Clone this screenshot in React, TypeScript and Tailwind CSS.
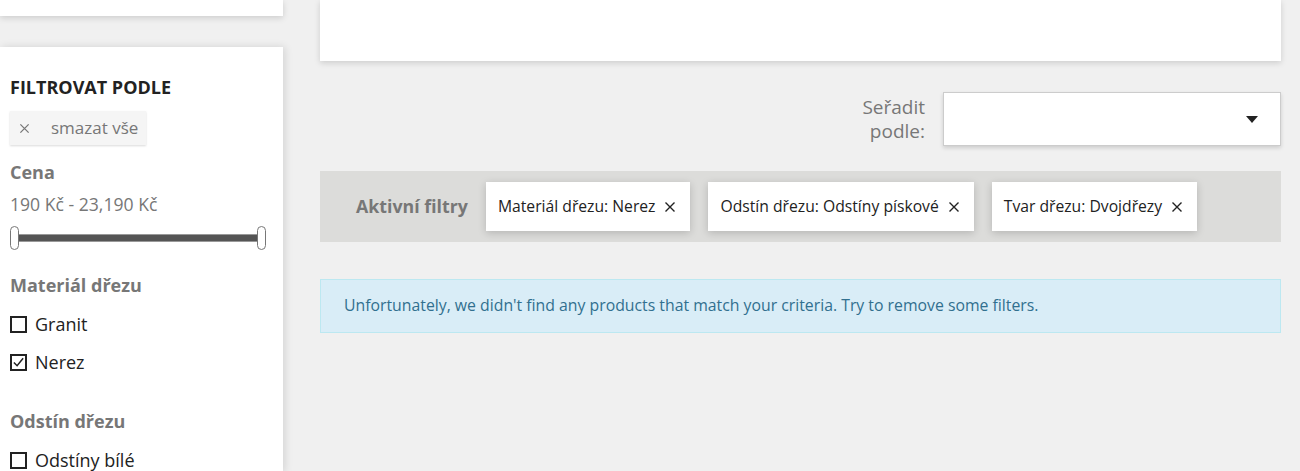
import React from "react";

const font = { fontFamily: '"Open Sans", "Noto Sans", sans-serif' };

function XIcon({ className = "" }: { className?: string }) {
  return (
    <svg viewBox="0 0 12 12" className={className} fill="none" stroke="currentColor" strokeWidth="1.4">
      <path d="M1.5 1.5 L10.5 10.5 M10.5 1.5 L1.5 10.5" />
    </svg>
  );
}

function Checkbox({ label, checked = false }: { label: string; checked?: boolean }) {
  return (
    <label className="flex items-center gap-[8px] h-6 text-[18px] text-[#222]">
      <span className="relative w-[17px] h-[17px] border-2 border-[#222] bg-white">
        {checked && (
          <svg viewBox="0 0 14 14" className="absolute inset-0 w-[13px] h-[13px]" fill="none" stroke="#222" strokeWidth="1.6">
            <path d="M2 7 L5.5 10.5 L12 2.5" />
          </svg>
        )}
      </span>
      {label}
    </label>
  );
}

function FilterChip({ label }: { label: string }) {
  return (
    <div className="flex items-center h-[49px] bg-white pl-3 pr-[14px] gap-[9px] shadow-[0_2px_8px_rgba(0,0,0,0.18)] text-[15.7px] text-[#222] whitespace-nowrap">
      <span>{label}</span>
      <XIcon className="w-[12px] h-[12px] text-[#222]" />
    </div>
  );
}

export default function App() {
  return (
    <div className="w-[1300px] h-[471px] overflow-hidden bg-[#f0f0f0] flex gap-[37px]" style={font}>
      <aside className="w-[283px] shrink-0 flex flex-col">
        <div className="h-4 shrink-0 bg-white shadow-[0_2px_6px_rgba(0,0,0,0.15)]" />
        <div className="mt-[31px] flex-1 bg-white shadow-[2px_0_8px_rgba(0,0,0,0.12)] pt-[28px] px-[10px]">
          <h2 className="text-[18px] leading-6 font-bold text-[#222]">FILTROVAT PODLE</h2>
          <button className="mt-3 h-[34px] flex items-center bg-[#f5f5f5] shadow-[0_1px_2px_rgba(0,0,0,0.15)] pl-[9px] pr-[8px] text-[17px] text-[#777]">
            <XIcon className="w-[11px] h-[11px] text-[#777]" />
            <span className="ml-[21px]">smazat vše</span>
          </button>
          <h3 className="mt-[15px] text-[18px] leading-6 font-bold text-[#777]">Cena</h3>
          <p className="mt-2 text-[17.6px] leading-6 text-[#777]">190 Kč - 23,190 Kč</p>
          <div className="mt-[10px] h-[24px] flex items-center w-[256px]">
            <span className="w-[9px] h-[24px] rounded-[5px] border border-[#777] bg-white shrink-0" />
            <span className="flex-1 h-[8px] bg-[#555] border-y border-[#999]" />
            <span className="w-[9px] h-[24px] rounded-[5px] border border-[#777] bg-white shrink-0" />
          </div>
          <h3 className="mt-[23px] text-[18px] leading-6 font-bold text-[#777]">Materiál dřezu</h3>
          <div className="mt-[15px] flex flex-col gap-[14px]">
            <Checkbox label="Granit" />
            <Checkbox label="Nerez" checked />
          </div>
          <h3 className="mt-[35px] text-[18px] leading-6 font-bold text-[#777]">Odstín dřezu</h3>
          <div className="mt-[15px] flex flex-col gap-[14px]">
            <Checkbox label="Odstíny bílé" />
          </div>
        </div>
      </aside>

      <main className="w-[961px] shrink-0 flex flex-col">
        <div className="h-[61px] shrink-0 bg-white shadow-[0_2px_6px_rgba(0,0,0,0.15)]" />

        <div className="mt-[31px] flex justify-end items-center gap-[18px]">
          <div className="text-right text-[19px] leading-6 text-[#777]">
            Seřadit
            <br />
            podle:
          </div>
          <div className="w-[338px] h-[54px] bg-white border border-[#ccc] shadow-[0_2px_4px_rgba(0,0,0,0.15)] flex items-center justify-end pr-[22px]">
            <svg viewBox="0 0 12 7" className="w-[12px] h-[7px]">
              <path d="M0 0 L12 0 L6 7 Z" fill="#222" />
            </svg>
          </div>
        </div>

        <div className="mt-[25px] h-[71px] bg-[#dcdcda] flex items-center pl-[36px] gap-[18px]">
          <span className="text-[17.8px] font-bold text-[#777]">Aktivní filtry</span>
          <FilterChip label="Materiál dřezu: Nerez" />
          <FilterChip label="Odstín dřezu: Odstíny pískové" />
          <FilterChip label="Tvar dřezu: Dvojdřezy" />
        </div>

        <div className="mt-[37px] h-[54px] bg-[#d9edf7] border border-[#bce8f1] flex items-center pl-[23px] text-[15.8px] text-[#31708f]">
          Unfortunately, we didn't find any products that match your criteria. Try to remove some filters.
        </div>
      </main>
    </div>
  );
}
